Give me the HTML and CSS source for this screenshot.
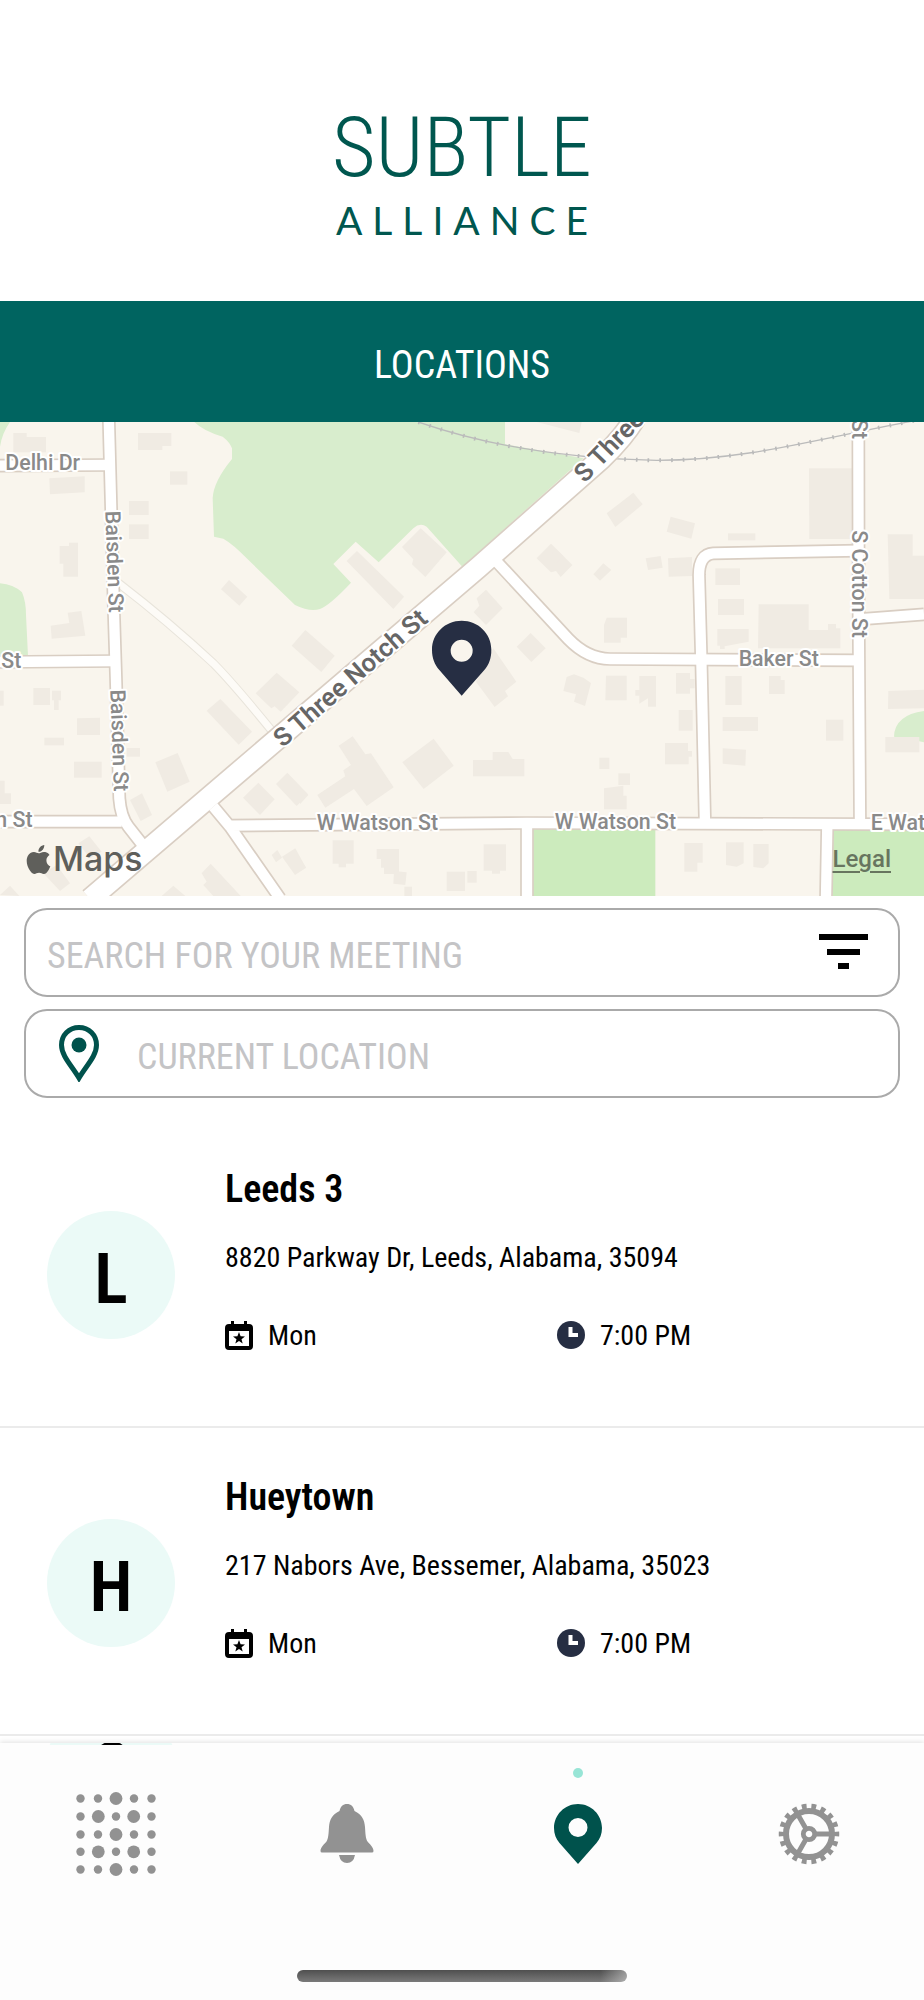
FILE: index.html
```html
<!DOCTYPE html>
<html lang="en">

<head>
    <meta charset="UTF-8">
    <meta name="viewport" content="width=device-width, initial-scale=1.0">
    <title>Subtle Alliance - Locations</title>
    <link rel="stylesheet" href="styles.css">
</head>

<body>

    <header class="brand">
        <span class="brand-name">SUBTLE</span>
        <span class="brand-sub">ALLIANCE</span>
    </header>

    <main>
        <h1 class="page-title">LOCATIONS</h1>

        <!-- Map -->
        <section class="map" aria-label="Map">
            <svg class="map-canvas" viewBox="0 21 2772 1422" preserveAspectRatio="xMidYMid slice">
                <!-- parks -->
                <g fill="#d8edcd">
                    <path d="M0 21H30Q6 55 0 95Z" />
                    <path d="M0 505Q40 508 66 532Q78 560 78 600L84 722H0Z" />
                    <path d="M583 21Q610 48 668 65Q690 82 696 100V132Q640 200 638 250L642 365L670 371Q700 388 740 430L885 570Q930 592 960 582Q990 570 1053 503L1000 447L1067 380L1136 442L1240 340Q1260 322 1280 335L1387 455L1750 130L1515 88V21Z" />
                    <path d="M2682 965Q2684 900 2772 888V982L2740 975Z" />
                </g>
                <g fill="#ccebbd">
                    <path d="M1598 1243H1966V1443H1598Z" />
                    <path d="M2500 1243H2772V1443H2498Z" />
                </g>

                <!-- buildings -->
                <g fill="#f0ebe3">
                    <path d="M40 54H80V66H138V112H40Z" />
                    <path d="M414 54H514V93H487V105H414Z" />
                    <path d="M148 190L254 184V232L150 238Z" />
                    <path d="M510 169H562V209H510Z" />
                    <path d="M387 258H446V300H387Z" />
                    <path d="M387 328H446V372H387Z" />
                    <path d="M207 383H234V485H190V446H179V393H207Z" />
                    <path d="M687 495L742 545L718 572L663 523Z" />
                    <path d="M152 632L208 624L203 593L244 588L256 662L155 671Z" />
                    <path d="M916 645L1004 722L964 771L875 692Z" />
                    <path d="M100 819H150V870H100Z" />
                    <path d="M156 827H183V856H176V885H162V856H156Z" />
                    <path d="M0 827H11V872H0Z" />
                    <path d="M830 773L898 832L842 890L824 874L814 880L767 835Z" />
                    <path d="M661 852L756 950L716 989L620 887Z" />
                    <path d="M231 910L300 908V960H231Z" />
                    <path d="M133 968H192V991H133Z" />
                    <path d="M380 999H420V1025H380Z" />
                    <path d="M466 1042L533 1014L569 1100L502 1130Z" />
                    <path d="M222 1040H305V1088H222Z" />
                    <path d="M0 1097H14V1135H33V1167H0Z" />
                    <path d="M390 1155L426 1135L456 1200L422 1218Z" />
                    <path d="M775 1103L824 1153L780 1200L729 1148Z" />
                    <path d="M862 1073L924 1138L890 1173L828 1107Z" />
                    <path d="M846 1325L886 1300L918 1358L885 1380Z" />
                    <path d="M815 1320L832 1305L846 1328L828 1342Z" />
                    <path d="M235 1285L268 1264L305 1310L270 1330Z" />
                    <path d="M130 1375L170 1350L210 1405L180 1428Z" />
                    <path d="M605 1375L632 1346L722 1443H640L610 1410L620 1400Z" />
                    <path d="M485 1443L520 1412L556 1443Z" />
                    <path d="M0 1440L30 1412L58 1443Z" />
                    <path d="M1071 408L1212 545L1180 582L1040 438Z" />
                    <path d="M1262 340L1340 412L1276 486L1236 448L1240 433L1206 396Z" />
                    <path d="M1458 524L1508 580L1458 630L1421 592L1438 572L1430 550Z" />
                    <path d="M1653 386L1717 450L1682 486L1668 468L1653 472L1610 430Z" />
                    <path d="M1668 402L1690 424L1668 446L1647 426Z" />
                    <path d="M1810 445L1834 465L1800 497L1780 478Z" />
                    <path d="M1592 654L1637 700L1594 741L1550 695Z" />
                    <path d="M1480 700L1549 800L1515 828L1524 844L1484 876L1428 800Z" />
                    <path d="M1722 778L1750 788L1773 804L1755 873L1722 860L1728 838L1690 828L1700 786Z" />
                    <path d="M1610 21H1745L1738 54Z" />
                    <path d="M1058 964L1096 1018L1113 1015L1181 1117L1100 1173L1062 1122L976 1178L952 1140L1036 1084L1030 1066L1053 1050L1016 992Z" />
                    <path d="M1301 971L1361 1052L1271 1122L1207 1042Z" />
                    <path d="M1419 1035H1478V1011H1525L1538 1032H1573V1084H1419Z" />
                    <path d="M1798 1028H1828V1062H1798Z" />
                    <path d="M900 1115L925 1140L900 1168Z" />
                    <path d="M998 1276H1061V1346H1038V1357H1016V1346H998Z" />
                    <path d="M1130 1302H1197V1377H1152V1358H1143V1332H1130Z" />
                    <path d="M1182 1368L1220 1372L1216 1410L1180 1406Z" />
                    <path d="M1451 1288H1518V1367H1500V1376H1476V1367H1451Z" />
                    <path d="M1340 1370H1395V1428H1340Z" />
                    <path d="M1402 1368H1430V1403H1402Z" />
                    <path d="M1213 1415H1236V1443H1213Z" />
                    <path d="M900 1330L918 1358L900 1368Z" />
                    <path d="M1820 295L1900 233L1928 268L1846 336Z" />
                    <path d="M2012 305L2085 325L2074 371L2000 350Z" />
                    <path d="M2184 355H2266V376H2184Z" />
                    <path d="M1937 430L1982 423L1988 458L1944 465Z" />
                    <path d="M2004 430L2076 426V483L2006 485Z" />
                    <path d="M2427 160H2556V372H2428Z" />
                    <path d="M2663 358H2738V422H2772V552H2668Z" />
                    <path d="M2146 460H2220V510H2146Z" />
                    <path d="M2154 552H2232V600H2154Z" />
                    <path d="M2152 642H2246V680L2174 694V702H2160V692H2152Z" />
                    <path d="M2276 568H2426V645H2484V627H2508V640H2521V700H2274Z" />
                    <path d="M1820 608H1881V668H1862V683H1812V630Z" />
                    <path d="M1818 782H1880V856H1816Z" />
                    <path d="M1918 783H1968V875H1944V850L1918 866V842H1906V825H1918Z" />
                    <path d="M2028 774H2070V792H2084V820H2070V836H2028Z" />
                    <path d="M2036 885H2078V947H2036Z" />
                    <path d="M1995 984H2064V1008H2076V1025H2066V1048H1995Z" />
                    <path d="M1855 1075H1890V1110H1855Z" />
                    <path d="M1812 1120L1870 1112V1142H1880V1183H1812Z" />
                    <path d="M2176 783H2225V870H2176Z" />
                    <path d="M2307 783H2342V795H2354V837H2307Z" />
                    <path d="M2168 906H2274V948H2168Z" />
                    <path d="M2478 914H2530V977H2478Z" />
                    <path d="M2168 1000L2238 1004L2236 1052L2168 1046Z" />
                    <path d="M2665 828L2772 824V880L2664 882Z" />
                    <path d="M2656 966H2758V1012H2656Z" />
                    <path d="M2053 1284H2108V1343H2092V1370H2053Z" />
                    <path d="M2178 1282H2231V1345L2210 1355L2178 1350Z" />
                    <path d="M2260 1287H2306V1345L2290 1360L2260 1356Z" />
                </g>

                <!-- railway -->
                <g class="rail">
                    <path d="M1255 21C1420 78 1640 130 1970 136C2250 136 2470 66 2772 12" />
                    <path class="rail-ties" d="M1255 21C1420 78 1640 130 1970 136C2250 136 2470 66 2772 12" />
                </g>

                <!-- lane -->
                <path class="lane-edge" d="M350 500C480 600 560 670 640 745Q700 805 830 965" />
                <path class="lane" d="M350 500C480 600 560 670 640 745Q700 805 830 965" />

                <!-- roads: casing first, then the surface -->
                <g class="road-edge">
                    <path d="M326 0L342 600L348 790L358 1150Q362 1205 385 1235L440 1305" />
                    <path d="M0 152L328 150M0 741L345 738M0 1220H365" />
                    <path d="M1490 440L1705 672Q1762 731 1830 732L2575 736" />
                    <path d="M2575 407L2140 415Q2097 418 2097 480L2104 735L2115 1228" />
                    <path d="M2575 0L2576 600L2580 1228M2575 613L2772 598" />
                    <path d="M640 1175L690 1235L840 1450M690 1232L1580 1224L2772 1228" />
                    <path d="M1581 1224V1450M2482 1228L2478 1450" />
                </g>
                <path class="main-edge" d="M270 1452L1435 457L1805 130Q1870 68 1905 10" />
                <g class="road">
                    <path d="M326 0L342 600L348 790L358 1150Q362 1205 385 1235L440 1305" />
                    <path d="M0 152L328 150M0 741L345 738M0 1220H365" />
                    <path d="M1490 440L1705 672Q1762 731 1830 732L2575 736" />
                    <path d="M2575 407L2140 415Q2097 418 2097 480L2104 735L2115 1228" />
                    <path d="M2575 0L2576 600L2580 1228M2575 613L2772 598" />
                    <path d="M640 1175L690 1235L840 1450M690 1232L1580 1224L2772 1228" />
                    <path d="M1581 1224V1450M2482 1228L2478 1450" />
                </g>
                <path class="main-road" d="M270 1452L1435 457L1805 130Q1870 68 1905 10" />

                <!-- street names -->
                <g class="street">
                    <text x="16" y="166">Delhi Dr</text>
                    <text x="4" y="758">St</text>
                    <text x="-14" y="1236">n St</text>
                    <text x="950" y="1244">W Watson St</text>
                    <text x="1664" y="1242">W Watson St</text>
                    <text x="2612" y="1244">E Wat</text>
                    <text x="2216" y="752">Baker St</text>
                    <text transform="translate(316 288) rotate(88)">Baisden St</text>
                    <text transform="translate(331 824) rotate(88)">Baisden St</text>
                    <text transform="translate(2557 346) rotate(90)">S Cotton St</text>
                    <text transform="translate(2557 12) rotate(90)">St</text>
                </g>
                <g class="street street-main">
                    <text transform="translate(848 1000) rotate(-41)">S Three Notch St</text>
                    <text transform="translate(1754 206) rotate(-46)">S Three</text>
                </g>

                <!-- selected place -->
                <path fill="#262e43" fill-rule="evenodd" d="M1385 617C1336 617 1296 655 1296 704C1296 730 1304 748 1318 765L1385 842L1453 765C1467 748 1474 730 1474 704C1474 655 1434 617 1385 617ZM1385 674A33 33 0 1 1 1385 740A33 33 0 1 1 1385 674Z" />
            </svg>
            <div class="map-credit">
                <span class="map-brand">
                    <svg width="29" height="29" viewBox="0 0 24 24" fill="currentColor" aria-hidden="true">
                        <path d="M12.15 6.9c-.95 0-2.42-1.08-3.96-1.04-2.04.03-3.91 1.18-4.96 3.01-2.12 3.68-.55 9.1 1.52 12.09 1.01 1.45 2.2 3.09 3.79 3.04 1.52-.07 2.09-.99 3.93-.99 1.83 0 2.35.99 3.96.95 1.64-.03 2.68-1.48 3.68-2.95 1.16-1.69 1.64-3.32 1.66-3.41-.04-.01-3.18-1.22-3.22-4.86-.03-3.04 2.48-4.49 2.6-4.56-1.43-2.09-3.62-2.32-4.39-2.37-2-.16-3.68 1.09-4.61 1.09zM15.53 3.83c.84-1.01 1.4-2.43 1.24-3.83-1.2.05-2.66.8-3.53 1.82-.78.9-1.45 2.34-1.27 3.71 1.34.1 2.71-.69 3.56-1.7" />
                    </svg>
                    <span>Maps</span>
                </span>
                <a class="map-legal" href="#legal">Legal</a>
            </div>
        </section>

        <!-- Search -->
        <form class="search">
            <div class="field">
                <input type="search" name="meeting" placeholder="SEARCH FOR YOUR MEETING" aria-label="Search for your meeting">
                <button type="button" class="filter" aria-label="Filter">
                    <svg width="49" height="36" viewBox="0 0 49 36" aria-hidden="true">
                        <path d="M0 0H49V6H0ZM8 15H41V21H8ZM19 29H30V35H19Z" />
                    </svg>
                </button>
            </div>
            <div class="field field-place">
                <label for="place" aria-label="Location">
                    <svg width="40" height="57" viewBox="0 0 40 57" aria-hidden="true">
                        <path d="M20 2.500C10 2.500 2.500 10 2.500 20C2.500 31 13 41 20 53C27 41 37.500 31 37.500 20C37.500 10 30 2.500 20 2.500Z" fill="none" stroke="#00524c" stroke-width="5" />
                        <circle cx="20" cy="20" r="7.500" fill="#00524c" />
                    </svg>
                </label>
                <input type="text" id="place" name="place" placeholder="CURRENT LOCATION">
            </div>
        </form>

        <!-- Meetings -->
        <ul class="meetings">
            <li class="meeting">
                <div class="avatar">L</div>
                <div class="meeting-info">
                    <h2>Leeds 3</h2>
                    <p>8820 Parkway Dr, Leeds, Alabama, 35094</p>
                    <div class="when">
                        <span>
                            <svg width="28" height="30" viewBox="0 0 28 30" aria-hidden="true">
                                <path fill-rule="evenodd" d="M6 0H9V3H19V0H22V3H24Q28 3 28 7V25Q28 29 24 29H4Q0 29 0 25V7Q0 3 4 3H6ZM4 10V25H24V10Z" />
                                <path d="M14 11L15.600 15.300L20 15.500L16.500 18.200L17.700 22.500L14 20L10.300 22.500L11.500 18.200L8 15.500L12.400 15.300Z" />
                            </svg>
                            Mon
                        </span>
                        <span>
                            <svg width="28" height="30" viewBox="0 0 28 30" aria-hidden="true">
                                <circle cx="14" cy="14" r="14" fill="#262e43" />
                                <path d="M13.500 6V14H21" fill="none" stroke="#fff" stroke-width="4" />
                            </svg>
                            7:00 PM
                        </span>
                    </div>
                </div>
            </li>
            <li class="meeting">
                <div class="avatar">H</div>
                <div class="meeting-info">
                    <h2>Hueytown</h2>
                    <p>217 Nabors Ave, Bessemer, Alabama, 35023</p>
                    <div class="when">
                        <span>
                            <svg width="28" height="30" viewBox="0 0 28 30" aria-hidden="true">
                                <path fill-rule="evenodd" d="M6 0H9V3H19V0H22V3H24Q28 3 28 7V25Q28 29 24 29H4Q0 29 0 25V7Q0 3 4 3H6ZM4 10V25H24V10Z" />
                                <path d="M14 11L15.600 15.300L20 15.500L16.500 18.200L17.700 22.500L14 20L10.300 22.500L11.500 18.200L8 15.500L12.400 15.300Z" />
                            </svg>
                            Mon
                        </span>
                        <span>
                            <svg width="28" height="30" viewBox="0 0 28 30" aria-hidden="true">
                                <circle cx="14" cy="14" r="14" fill="#262e43" />
                                <path d="M13.500 6V14H21" fill="none" stroke="#fff" stroke-width="4" />
                            </svg>
                            7:00 PM
                        </span>
                    </div>
                </div>
            </li>
            <li class="meeting-next">
                <div class="clip">
                    <div class="avatar">C</div>
                </div>
            </li>
        </ul>
    </main>

    <!-- Tab bar -->
    <nav class="tabs">
        <div class="tab-row">
            <a href="#home" aria-label="Home">
                <svg width="80" height="84" viewBox="0 0 80 84" fill="currentColor" aria-hidden="true">
                    <g id="dots-plain">
                        <circle cx="4.500" cy="6.500" r="4.200" /><circle cx="22" cy="6.500" r="4.200" /><circle cx="40" cy="6.500" r="6.400" /><circle cx="58" cy="6.500" r="4.200" /><circle cx="75.500" cy="6.500" r="4.200" />
                    </g>
                    <g id="dots-wide">
                        <circle cx="4.500" cy="24.500" r="4.200" /><circle cx="22.300" cy="24.500" r="6.400" /><circle cx="40" cy="24.500" r="4.200" /><circle cx="57.700" cy="24.500" r="6.400" /><circle cx="75.500" cy="24.500" r="4.200" />
                    </g>
                    <use href="#dots-plain" y="36" />
                    <use href="#dots-wide" y="35.300" />
                    <use href="#dots-plain" y="71" />
                </svg>
            </a>
            <a href="#alerts" aria-label="Notifications">
                <svg width="54" height="60" viewBox="0 0 54 60" fill="currentColor" aria-hidden="true">
                    <path d="M27 0C23 0 20.500 2.500 19.500 7C12 10.500 9.500 16 9 23C8.500 30 8.500 34 6.500 37.500C4.500 40 0.500 43 0.500 47Q0.500 48.500 2 48.500H52Q53.500 48.500 53.500 47C53.500 43 49.500 40 47.500 37.500C45.500 34 45.500 30 45 23C44.500 16 42 10.500 34.500 7C33.500 2.500 31 0 27 0Z" />
                    <path d="M19 51H35Q33.500 59 27 59Q20.500 59 19 51Z" />
                </svg>
            </a>
            <a href="#locations" class="active" aria-label="Locations" aria-current="page">
                <svg width="48" height="60" viewBox="0 0 48 60" fill="currentColor" aria-hidden="true">
                    <path fill-rule="evenodd" d="M24 0C10.500 0 0 11 0 24C0 30 2 35 5.500 39L24 60L42.500 39C46 35 48 30 48 24C48 11 37.500 0 24 0ZM24 14A9.500 9.500 0 1 1 24 33A9.500 9.500 0 1 1 24 14Z" />
                </svg>
            </a>
            <a href="#settings" aria-label="Settings">
                <svg width="62" height="62" viewBox="-31 -31 62 62" fill="none" stroke="currentColor" aria-hidden="true">
                    <circle r="27.500" stroke-width="5.500" pathLength="36" stroke-dasharray="1 1" stroke-dashoffset="0.500" />
                    <circle r="23" stroke-width="6" />
                    <circle r="5.700" stroke-width="4.800" />
                    <path d="M7 0H21M-3.500 -6L-10.500 -18.200M-3.500 6L-10.500 18.200" stroke-width="5" />
                </svg>
            </a>
        </div>
        <div class="home-bar"></div>
    </nav>

</body>

</html>
```
FILE: styles.css
```css
/* General Reset */
* {
    margin: 0;
    padding: 0;
    box-sizing: border-box;
}

body {
    font-family: 'Roboto Condensed', 'Liberation Sans', sans-serif;
    background-color: #fff;
    color: #000;
}

svg {
    display: block;
    flex-shrink: 0;
}

/* Header */
.brand {
    display: flex;
    flex-direction: column;
    align-items: center;
    gap: 15px;
    padding: 110px 0 60px;
    color: #00574f;
}

.brand-name {
    font-size: 84px;
    font-weight: 300;
    line-height: 76px;
}

.brand-sub {
    font-family: Lato, sans-serif;
    font-size: 39px;
    font-weight: 400;
    line-height: 38px;
    letter-spacing: 10px;
    padding: 0 0 2px 10px;
}

.page-title {
    background: #006460;
    color: #fff;
    text-align: center;
    font-size: 38px;
    font-weight: 400;
    line-height: 48px;
    padding: 40px 0 33px;
}

/* Map */
.map {
    position: relative;
    background: #f9f5ed;
}

.map-canvas {
    width: 100%;
    height: auto;
}

.road-edge,
.road,
.rail,
.lane-edge,
.lane,
.main-edge,
.main-road {
    fill: none;
}

.road-edge {
    stroke: #d9cec3;
    stroke-width: 41;
}

.road {
    stroke: #fff;
    stroke-width: 31;
}

.main-edge {
    stroke: #d9cec3;
    stroke-width: 70;
}

.main-road {
    stroke: #fff;
    stroke-width: 60;
}

.lane-edge {
    stroke: #e8e4db;
    stroke-width: 27;
}

.lane {
    stroke: #fdfbf7;
    stroke-width: 21;
}

.rail {
    stroke: #bbb;
    stroke-width: 4;
}

.rail-ties {
    stroke-width: 12;
    stroke-dasharray: 5 30;
}

.street {
    font-family: Roboto, sans-serif;
    font-size: 64px;
    font-weight: 500;
    fill: #8a8a8a;
    stroke: #fff;
    stroke-width: 12;
    stroke-linejoin: round;
    paint-order: stroke;
}

.street-main {
    font-size: 77px;
    font-weight: 600;
    fill: #666;
}

.map-credit {
    position: absolute;
    left: 0;
    right: 0;
    bottom: 0;
    display: flex;
    justify-content: space-between;
    align-items: center;
    padding: 0 33px 15px 24px;
    font-family: Inter, sans-serif;
    color: #5f5f5b;
}

.map-brand {
    display: flex;
    align-items: center;
    font-size: 34px;
    font-weight: 500;
    line-height: 44px;
}

.map-legal {
    font-family: Roboto, sans-serif;
    font-size: 24px;
    font-weight: 500;
    color: #67755f;
    text-underline-offset: 4px;
}

/* Search */
.search {
    display: flex;
    flex-direction: column;
    gap: 12px;
    padding: 12px 24px 22px;
}

.field {
    display: flex;
    align-items: center;
    height: 89px;
    padding: 0 30px 0 21px;
    border: 2px solid #aaa;
    border-radius: 23px;
}

.field-place {
    gap: 38px;
    padding-left: 33px;
}

.field input {
    flex: 1;
    min-width: 0;
    border: none;
    outline: none;
    background: none;
    font-family: inherit;
    font-size: 36px;
    line-height: 44px;
    padding-top: 6px;
}

.field input::placeholder {
    color: #c4c4c6;
}

.filter {
    border: none;
    background: none;
    padding-bottom: 2px;
}

/* Meetings */
.meetings {
    list-style: none;
}

.meeting {
    display: flex;
    gap: 50px;
    padding: 47px 47px 72px;
    border-bottom: 2px solid #ebebeb;
}

.avatar {
    display: flex;
    align-items: center;
    justify-content: center;
    flex-shrink: 0;
    width: 128px;
    height: 128px;
    padding-top: 8px;
    border-radius: 50%;
    background: #ebfaf7;
    font-size: 70px;
    font-weight: 600;
}

.meeting .avatar {
    margin-top: 44px;
}

.meeting-info {
    flex: 1;
}

.meeting h2 {
    font-size: 38px;
    font-weight: 600;
    line-height: 44px;
    margin-bottom: 29px;
}

.meeting p,
.when {
    font-size: 28px;
    line-height: 36px;
}

.when {
    display: grid;
    grid-template-columns: minmax(0, 332px) 1fr;
    margin-top: 42px;
}

.when span {
    display: flex;
    align-items: center;
    gap: 15px;
}

/* only the top edge of the next meeting shows above the tab bar */
.meeting-next {
    position: relative;
    z-index: 1;
    padding: 7px 47px 0;
}

.clip {
    height: 2px;
    overflow: hidden;
}

.clip .avatar {
    margin-top: -43px;
}

/* Tab bar */
.tabs {
    margin-top: -2px;
    padding-bottom: 18px;
    background: #fdfdfd;
    box-shadow: 0 -1px 5px rgba(0, 0, 0, 0.12);
}

.tab-row {
    display: flex;
}

.tab-row a {
    position: relative;
    display: flex;
    flex: 1;
    align-items: center;
    justify-content: center;
    height: 182px;
    color: #929292;
}

.tab-row .active {
    color: #00524c;
}

.tab-row .active::before {
    content: "";
    position: absolute;
    top: 25px;
    width: 10px;
    height: 10px;
    border-radius: 50%;
    background: #98e5d6;
}

.home-bar {
    width: 330px;
    max-width: 60%;
    height: 12px;
    margin: 45px auto 0;
    border-radius: 6px;
    background: linear-gradient(90deg, transparent 92%, rgba(255, 255, 255, 0.4)), linear-gradient(#4f4f4f, #7a7a7a);
}
```
